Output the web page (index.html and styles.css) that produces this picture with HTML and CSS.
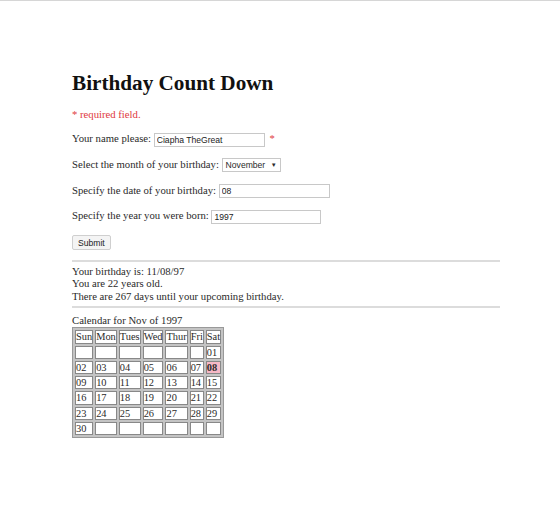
FILE: index.html
```html
<!DOCTYPE html>
<html lang="en">
<head>
  <meta charset="UTF-8">
  <title>Birthday Count Down</title>
  <link rel="stylesheet" href="styles.css">
</head>
<body>
  <div class="page">
    <h1 class="title">Birthday Count Down</h1>

    <p class="required">* required field.</p>

    <form class="bday-form">
      <p class="row">Your name please: <input class="text-in name-in" type="text" value="Ciapha TheGreat"> <span class="star">*</span></p>
      <p class="row">Select the month of your birthday: <span class="select-box">November <span class="arrow">&#9660;</span></span></p>
      <p class="row">Specify the date of your birthday: <input class="text-in date-in" type="text" value="08"></p>
      <p class="row">Specify the year you were born: <input class="text-in year-in" type="text" value="1997"></p>
      <p class="row"><button class="submit-btn" type="button">Submit</button></p>
    </form>

    <hr class="rule">
    <div class="result">
      Your birthday is: 11/08/97<br>
      You are 22 years old.<br>
      There are 267 days until your upcoming birthday.
    </div>
    <hr class="rule">

    <div class="cal-caption">Calendar for Nov of 1997</div>
    <table class="cal">
      <tr><td>Sun</td><td>Mon</td><td>Tues</td><td>Wed</td><td>Thur</td><td>Fri</td><td>Sat</td></tr>
      <tr><td></td><td></td><td></td><td></td><td></td><td></td><td>01</td></tr>
      <tr><td>02</td><td>03</td><td>04</td><td>05</td><td>06</td><td>07</td><td class="today">08</td></tr>
      <tr><td>09</td><td>10</td><td>11</td><td>12</td><td>13</td><td>14</td><td>15</td></tr>
      <tr><td>16</td><td>17</td><td>18</td><td>19</td><td>20</td><td>21</td><td>22</td></tr>
      <tr><td>23</td><td>24</td><td>25</td><td>26</td><td>27</td><td>28</td><td>29</td></tr>
      <tr><td>30</td><td></td><td></td><td></td><td></td><td></td><td></td></tr>
    </table>
  </div>
</body>
</html>
```

FILE: styles.css
```css
html, body {
  margin: 0;
  padding: 0;
  background: #fff;
}

body {
  border-top: 1px solid #d6d6d6;
  font-family: "Liberation Serif", "Times New Roman", serif;
  font-size: 10.7px;
  color: #2a2a2a;
}

.page {
  width: 428px;
  padding: 60px 0 40px 72px;
}

.title {
  font-size: 21.2px;
  font-weight: bold;
  color: #111;
  margin: 10px 0 12px 0;
  line-height: 24px;
}

.required {
  color: #e0393e;
  margin: 0 0 10px 0;
  line-height: 14px;
}

.bday-form {
  margin: 0;
}

.row {
  margin: 0 0 10.8px 0;
  line-height: 15px;
  height: 15px;
}

.text-in {
  font-family: "Liberation Sans", Arial, sans-serif;
  font-size: 8.6px;
  color: #222;
  height: 14px;
  padding: 0 2px;
  border: 1px solid #c8c8c8;
  box-sizing: border-box;
  vertical-align: middle;
  margin: 0;
}

.name-in {
  width: 111px;
}

.date-in {
  width: 111px;
}

.year-in {
  width: 110px;
}

.star {
  color: #e0393e;
  margin-left: 2px;
}

.select-box {
  display: inline-block;
  font-family: "Liberation Sans", Arial, sans-serif;
  font-size: 8.6px;
  line-height: 12px;
  height: 14px;
  padding: 0 3px;
  border: 1px solid #c8c8c8;
  box-sizing: border-box;
  vertical-align: middle;
}

.arrow {
  font-size: 6px;
  margin-left: 3px;
  vertical-align: 1px;
}

.submit-btn {
  font-family: "Liberation Sans", Arial, sans-serif;
  font-size: 8.6px;
  height: 15px;
  padding: 0 5px;
  background: #f4f4f4;
  border: 1px solid #cfcfcf;
  border-radius: 2px;
  color: #222;
  margin: 0;
  vertical-align: middle;
}

.rule {
  border: none;
  border-top: 2px solid #dcdcdc;
  margin: 4px 0 3px 0;
}

.result {
  line-height: 12.5px;
}

.cal-caption {
  line-height: 13px;
  margin-top: 6px;
}

.cal {
  border: 1px solid #999;
  background: #c4c4c4;
  border-spacing: 2px;
  padding: 0;
}

.cal td {
  background: #fff;
  border: 1px solid #888;
  padding: 0;
  height: 11.2px;
  line-height: 11.2px;
  font-size: 10.4px;
  min-width: 12px;
}

.cal td.today {
  background: #f6b8c6;
  font-weight: bold;
}
```
